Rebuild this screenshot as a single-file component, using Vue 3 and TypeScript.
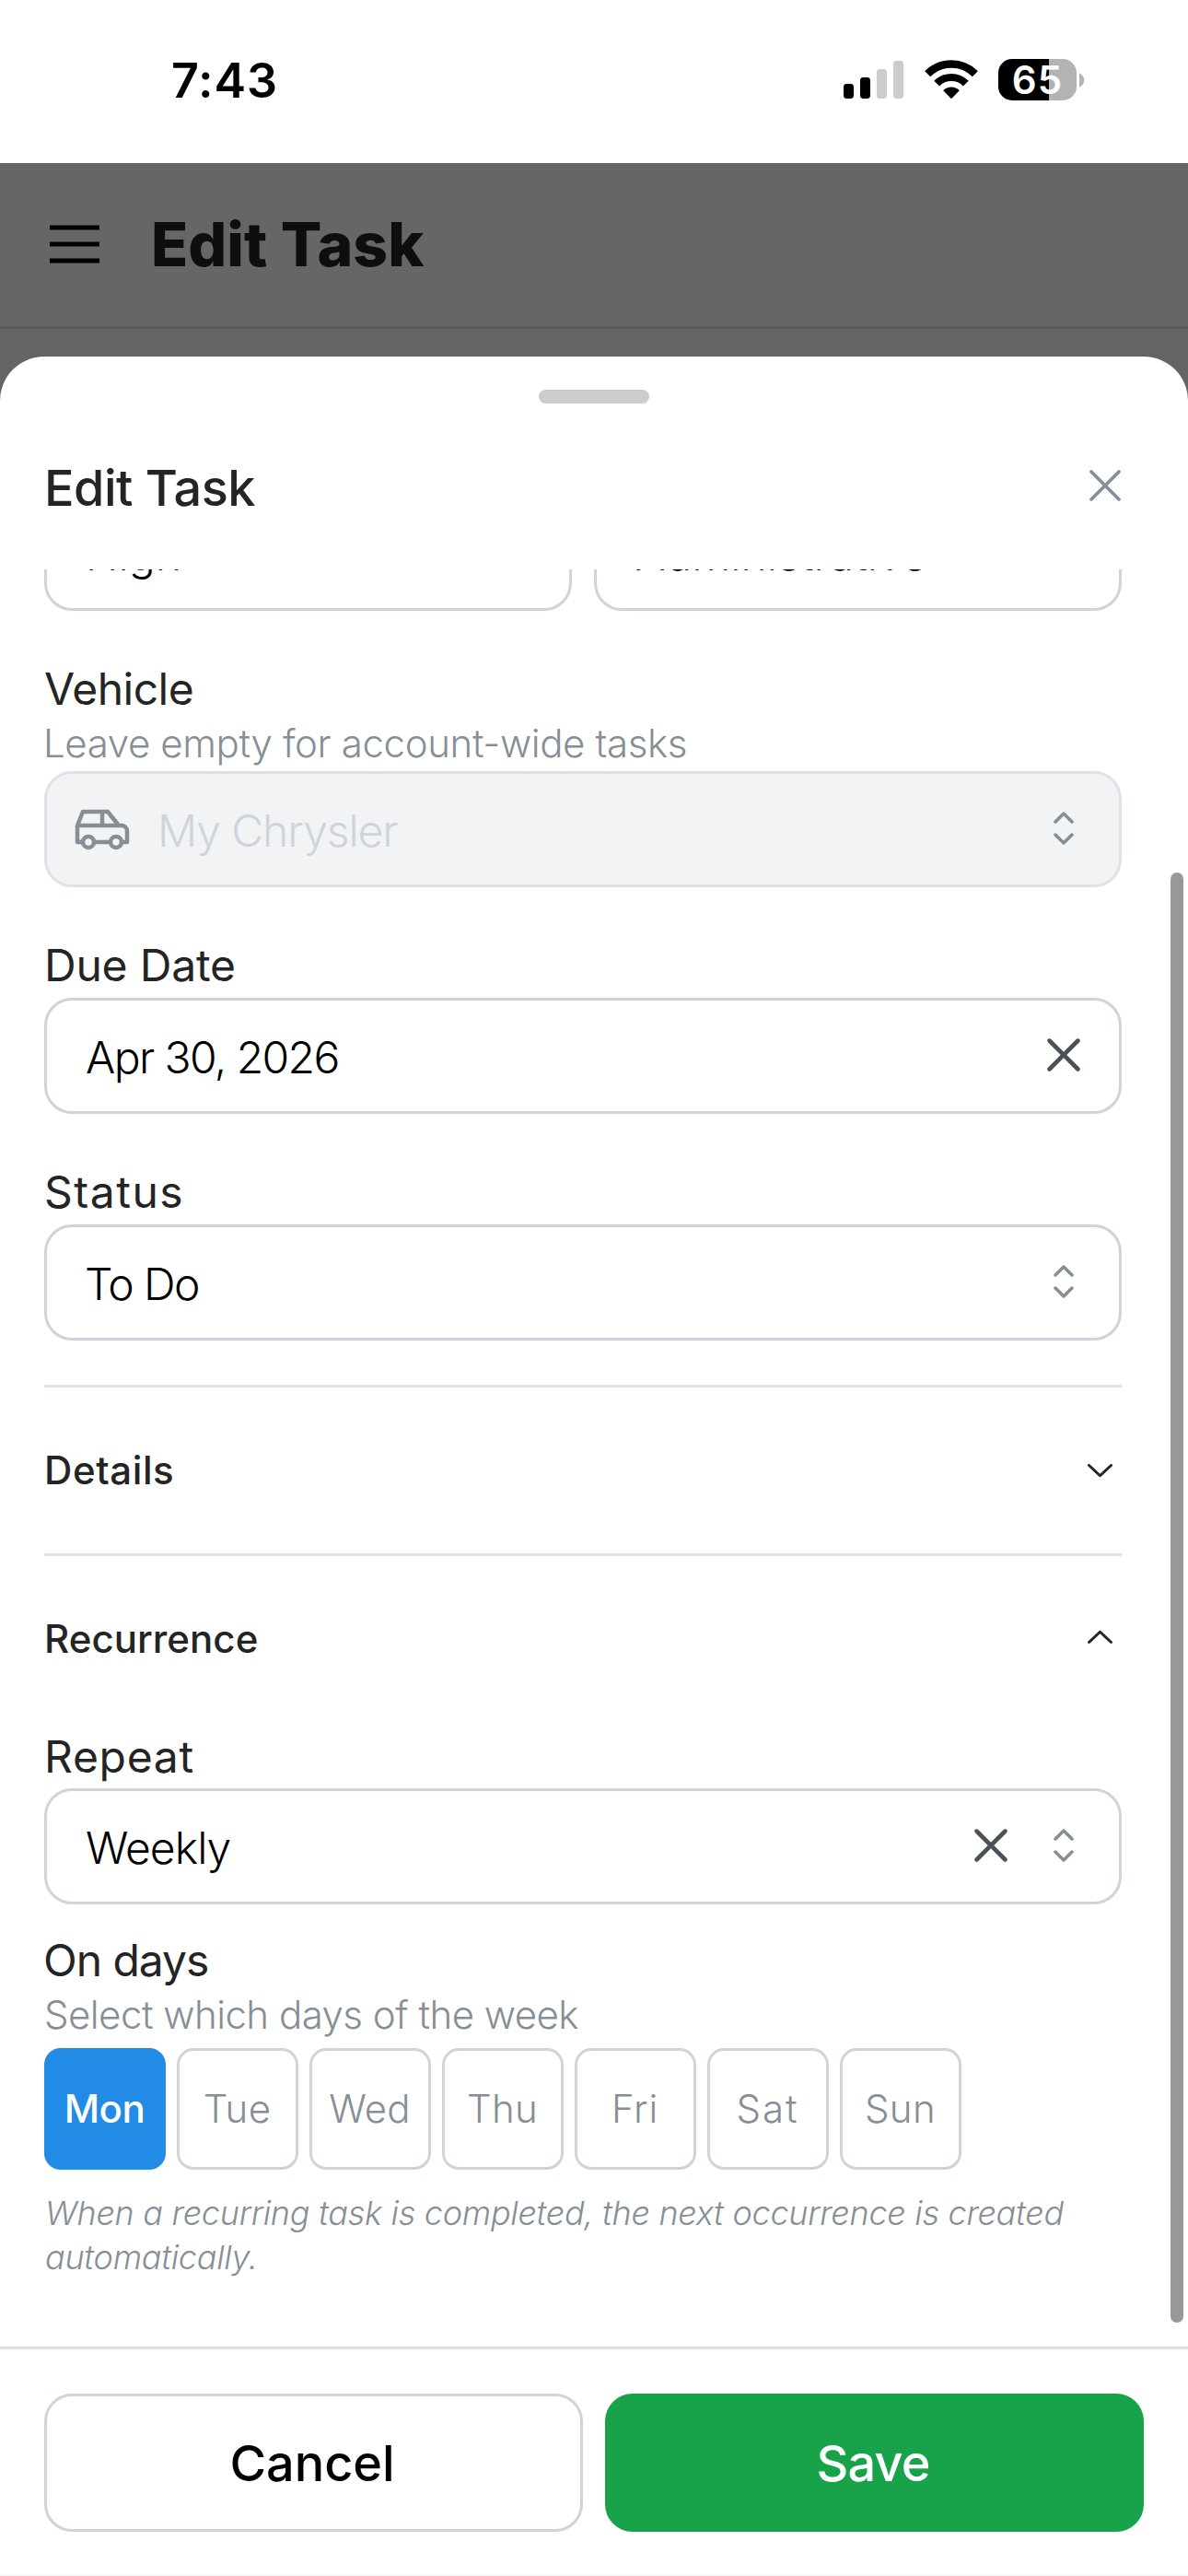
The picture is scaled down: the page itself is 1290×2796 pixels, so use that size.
<script setup lang="ts">
import { ref } from 'vue'

interface Day {
  name: string
  spacing: string
}

const days: Day[] = [
  { name: 'Mon', spacing: '-0.5px' },
  { name: 'Tue', spacing: '0.3px' },
  { name: 'Wed', spacing: '0.1px' },
  { name: 'Thu', spacing: '0.3px' },
  { name: 'Fri', spacing: '0.8px' },
  { name: 'Sat', spacing: '2px' },
  { name: 'Sun', spacing: '0.4px' },
]
const selected = ref<string[]>(['Mon'])

function toggle(name: string) {
  selected.value = selected.value.includes(name)
    ? selected.value.filter((d) => d !== name)
    : [...selected.value, name]
}

const selectorPath =
  'M4.93179 5.43179C4.75605 5.60753 4.75605 5.89245 4.93179 6.06819C5.10753 6.24392 5.39245 6.24392 5.56819 6.06819L7.49999 4.13638L9.43179 6.06819C9.60753 6.24392 9.89245 6.24392 10.0682 6.06819C10.2439 5.89245 10.2439 5.60753 10.0682 5.43179L7.81819 3.18179C7.73379 3.0974 7.61933 3.04999 7.49999 3.04999C7.38064 3.04999 7.26618 3.0974 7.18179 3.18179L4.93179 5.43179ZM10.0682 9.56819C10.2439 9.39245 10.2439 9.10753 10.0682 8.93179C9.89245 8.75606 9.60753 8.75606 9.43179 8.93179L7.49999 10.8636L5.56819 8.93179C5.39245 8.75606 5.10753 8.75606 4.93179 8.93179C4.75605 9.10753 4.75605 9.39245 4.93179 9.56819L7.18179 11.8182C7.35753 11.9939 7.64245 11.9939 7.81819 11.8182L10.0682 9.56819Z'
const clearPath =
  'M11.7816 4.03157C12.0062 3.80702 12.0062 3.44295 11.7816 3.2184C11.5571 2.99385 11.193 2.99385 10.9685 3.2184L7.50005 6.68682L4.03164 3.2184C3.80708 2.99385 3.44301 2.99385 3.21846 3.2184C2.99391 3.44295 2.99391 3.80702 3.21846 4.03157L6.68688 7.49999L3.21846 10.9684C2.99391 11.193 2.99391 11.557 3.21846 11.7816C3.44301 12.0061 3.80708 12.0061 4.03164 11.7816L7.50005 8.31316L10.9685 11.7816C11.193 12.0061 11.5571 12.0061 11.7816 11.7816C12.0062 11.557 12.0062 11.193 11.7816 10.9684L8.31322 7.49999L11.7816 4.03157Z'
const chevronPath =
  'M3.13523 6.15803C3.3241 5.95657 3.64052 5.94637 3.84197 6.13523L7.5 9.56464L11.158 6.13523C11.3595 5.94637 11.6759 5.95657 11.8648 6.15803C12.0536 6.35949 12.0434 6.67591 11.842 6.86477L7.84197 10.6148C7.64964 10.7951 7.35036 10.7951 7.15803 10.6148L3.15803 6.86477C2.95657 6.67591 2.94637 6.35949 3.13523 6.15803Z'
</script>

<template>
  <div class="screen">
    <div class="status-bar">
      <span class="time">7:43</span>
      <div class="indicators">
        <svg class="signal" width="66" height="42" viewBox="0 0 66 42">
          <rect x="0" y="25" width="11" height="16" rx="3.4" />
          <rect x="18" y="18" width="11" height="23" rx="3.4" />
          <rect x="36" y="9" width="11" height="32" rx="3.4" fill="#ccc" />
          <rect x="54" y="0" width="11" height="41" rx="3.4" fill="#ccc" />
        </svg>
        <svg class="wifi" width="58" height="43" viewBox="0 0 58 43">
          <path d="M3.2 15.2A36.5 36.5 0 0 1 54.8 15.2" fill="none" stroke="#000" stroke-width="8.6" />
          <path d="M13.2 25.6A22.2 22.2 0 0 1 44.8 25.6" fill="none" stroke="#000" stroke-width="8.2" />
          <path d="M29 42.2L20.2 33.2A12.6 12.6 0 0 1 37.8 33.2Z" />
        </svg>
        <div class="battery"><span class="level">65</span></div>
        <svg class="nub" width="6" height="16" viewBox="0 0 6 16">
          <path d="M0 0.5C3 1.6 5.2 4.6 5.2 8S3 14.4 0 15.5Z" fill="#b3b3b3" />
        </svg>
      </div>
    </div>

    <header class="app-header">
      <svg width="54" height="42" viewBox="0 0 54 42">
        <path d="M0 3H54M0 21H54M0 39H54" stroke="#000" stroke-width="4.8" />
      </svg>
      <h1>Edit Task</h1>
    </header>

    <section class="sheet">
      <div class="handle"></div>
      <div class="sheet-header">
        <h2>Edit Task</h2>
        <svg class="close" width="60" height="60" viewBox="0 0 24 24" fill="none" stroke="#868e96" stroke-width="1.5" stroke-linecap="round">
          <path d="M18 6L6 18M6 6l12 12" />
        </svg>
      </div>

      <div class="body">
        <div class="content">
          <div class="pair">
            <div class="input"><span>High</span></div>
            <div class="input"><span class="w-category">Administrative</span></div>
          </div>

          <div class="field">
            <div class="label w-vehicle">Vehicle</div>
            <div class="desc w-leave">Leave empty for account-wide tasks</div>
            <div class="input disabled">
              <svg class="car" width="72" height="72" viewBox="0 0 24 24" fill="none" stroke="#868e96" stroke-width="1.5" stroke-linecap="round" stroke-linejoin="round">
                <path d="M5 17a2 2 0 1 0 4 0a2 2 0 1 0 -4 0M15 17a2 2 0 1 0 4 0a2 2 0 1 0 -4 0" />
                <path d="M5 17h-2v-6l2 -5h9l4 5h1a2 2 0 0 1 2 2v4h-2m-4 0h-6m-6 -6h15m-6 0v-5" />
              </svg>
              <span class="w-car">My Chrysler</span>
              <svg class="sel" viewBox="0 0 15 15"><path :d="selectorPath" /></svg>
            </div>
          </div>

          <div class="field">
            <div class="label gap w-due">Due Date</div>
            <div class="input">
              <span class="w-date">Apr 30, 2026</span>
              <svg class="clear" viewBox="0 0 15 15"><path :d="clearPath" /></svg>
            </div>
          </div>

          <div class="field">
            <div class="label gap w-status">Status</div>
            <div class="input">
              <span class="w-todo">To Do</span>
              <svg class="sel" viewBox="0 0 15 15"><path :d="selectorPath" /></svg>
            </div>
          </div>

          <div class="section first">
            <span class="w-details">Details</span>
            <svg class="chev" viewBox="0 0 15 15"><path :d="chevronPath" /></svg>
          </div>
          <div class="section">
            <span class="w-rec">Recurrence</span>
            <svg class="chev open" viewBox="0 0 15 15"><path :d="chevronPath" /></svg>
          </div>

          <div class="field repeat">
            <div class="label w-repeat">Repeat</div>
            <div class="input">
              <span class="w-weekly">Weekly</span>
              <svg class="clear inner" viewBox="0 0 15 15"><path :d="clearPath" /></svg>
              <svg class="sel" viewBox="0 0 15 15"><path :d="selectorPath" /></svg>
            </div>
          </div>

          <div class="field on-days">
            <div class="label w-ondays">On days</div>
            <div class="desc gap w-select">Select which days of the week</div>
            <div class="days">
              <button
                v-for="day in days"
                :key="day.name"
                class="day"
                :class="{ active: selected.includes(day.name) }"
                :style="{ letterSpacing: day.spacing }"
                @click="toggle(day.name)"
              >{{ day.name }}</button>
            </div>
          </div>

          <p class="note">When a recurring task is completed, the next occurrence is created automatically.</p>
        </div>
        <div class="scrollbar"></div>
      </div>

      <footer class="footer">
        <button class="btn">Cancel</button>
        <button class="btn save">Save</button>
      </footer>
    </section>
  </div>
</template>

<style>
html,
body {
  margin: 0;
  background: #fff;
}
</style>

<style scoped>
.screen {
  width: 1290px;
  height: 2796px;
  box-sizing: border-box;
  display: flex;
  flex-direction: column;
  overflow: hidden;
  background: linear-gradient(#fff 0 177px, #646464 177px);
  font-family: Inter, 'Liberation Sans', sans-serif;
  color: #242424;
}
.status-bar {
  height: 177px;
  flex: none;
  box-sizing: border-box;
  padding: 58px 112px 0 186px;
  display: flex;
  justify-content: space-between;
  align-items: flex-start;
  background: #fff;
}
.time {
  font-size: 52px;
  line-height: 60px;
  font-weight: 600;
  letter-spacing: 0.9px;
  color: #000;
}
.indicators {
  display: flex;
  align-items: flex-start;
  padding-top: 6px;
}
.signal {
  margin-top: 2px;
}
.wifi {
  margin: 1px 0 0 21.5px;
}
.battery {
  width: 85px;
  height: 45px;
  margin-left: 22.5px;
  border-radius: 15px;
  background: linear-gradient(90deg, #000 0 55px, #b3b3b3 55px);
  color: #fff;
}
.level {
  display: block;
  padding-left: 14.7px;
  font-size: 42px;
  line-height: 46px;
  font-weight: 600;
  letter-spacing: 1.1px;
}
.nub {
  margin: 15px 0 0 3px;
}
.app-header {
  height: 180px;
  flex: none;
  box-sizing: border-box;
  border-bottom: 3px solid #5b5b5b;
  background: #666;
  padding-left: 54px;
  display: flex;
  align-items: center;
}
.app-header svg {
  margin-top: -1px;
}
.app-header h1 {
  margin: -2px 0 0 56px;
  font-size: 66px;
  line-height: 80px;
  font-weight: 800;
  letter-spacing: 0;
  color: #0e0e0f;
}
.sheet {
  flex: 1;
  min-height: 0;
  margin-top: 30px;
  display: flex;
  flex-direction: column;
  background: #fff;
  border-radius: 48px 48px 0 0;
}
.handle {
  flex: none;
  width: 120px;
  height: 15px;
  margin: 36px auto 0;
  border-radius: 8px;
  background: #ccc;
}
.sheet-header {
  flex: none;
  height: 180px;
  box-sizing: border-box;
  padding: 59px 60px 0 48px;
  display: flex;
  justify-content: space-between;
  align-items: flex-start;
}
.sheet-header h2 {
  margin: 0;
  font-size: 54px;
  line-height: 65px;
  font-weight: 500;
  letter-spacing: -0.5px;
}
.body {
  flex: 1;
  min-height: 0;
  position: relative;
  overflow: hidden;
}
.content {
  margin: -81px 72px 0 48px;
}
.pair {
  display: grid;
  grid-template-columns: 1fr 1fr;
  gap: 24px;
}
.input {
  height: 126px;
  box-sizing: border-box;
  border: 3px solid #ced4da;
  border-radius: 30px;
  padding: 2px 30px 0 42px;
  display: flex;
  align-items: center;
  font-size: 48px;
  font-weight: 300;
  color: #000;
}
.input.disabled {
  background: #f1f3f5;
  border-color: #dee2e6;
  color: #ced4da;
  padding-left: 24px;
}
.car {
  flex: none;
  margin: -4px 24px 0 0;
}
.input span {
  white-space: nowrap;
}
.sel {
  flex: none;
  width: 60px;
  height: 60px;
  margin: -4px 0 0 auto;
  fill: #868e96;
}
.clear {
  flex: none;
  width: 60px;
  height: 60px;
  margin: -5px 0 0 auto;
  fill: #495057;
}
.clear.inner + .sel {
  margin-left: 19px;
}
.field {
  margin-top: 54px;
}
.label {
  height: 60px;
  line-height: 61px;
  font-size: 48px;
  font-weight: 400;
}
.desc {
  height: 60px;
  line-height: 60px;
  font-size: 42px;
  font-weight: 300;
  color: #868e96;
  white-space: nowrap;
}
.gap {
  margin-bottom: 6px;
}
.section {
  height: 183px;
  box-sizing: border-box;
  border-top: 3px solid #dee2e6;
  padding-right: 1.5px;
  display: flex;
  justify-content: space-between;
  align-items: center;
  font-size: 42px;
  font-weight: 500;
}
.section span {
  margin-top: -2px;
}
.section.first {
  margin-top: 48px;
}
.chev {
  width: 45px;
  height: 45px;
  fill: #242424;
  margin-top: -6px;
}
.chev.open {
  margin-top: 1px;
  transform: rotate(180deg);
}
.repeat {
  margin-top: 7px;
}
.repeat .label {
  margin-bottom: 5px;
}
.on-days {
  margin-top: 30px;
}
.days {
  display: flex;
  gap: 12px;
}
.day {
  width: 132px;
  height: 132px;
  box-sizing: border-box;
  border: 3px solid #ced4da;
  border-radius: 18px;
  padding: 0 1px 1px 0;
  background: #fff;
  font-family: inherit;
  font-size: 42px;
  font-weight: 300;
  color: #868e96;
}
.day.active {
  background: #228be6;
  border-color: #228be6;
  color: #fff;
  font-weight: 500;
}
.note {
  margin: 23px 0 0 1px;
  font-size: 36px;
  line-height: 48px;
  font-style: italic;
  font-weight: 300;
  letter-spacing: -0.28px;
  color: #868e96;
}
.scrollbar {
  position: absolute;
  top: 329px;
  right: 5px;
  width: 14px;
  height: 1574px;
  border-radius: 7px;
  background: #989898;
}
.footer {
  flex: none;
  height: 249px;
  box-sizing: border-box;
  border-top: 3px solid #dee2e6;
  border-bottom: 1px solid #f3f3f3;
  padding: 48px 48px 0;
  display: grid;
  grid-template-columns: 1fr 1fr;
  gap: 24px;
}
.btn {
  height: 150px;
  box-sizing: border-box;
  border: 3px solid #ced4da;
  border-radius: 30px;
  padding: 1px 3px 0 0;
  background: #fff;
  font-family: inherit;
  font-size: 54px;
  font-weight: 500;
  color: #000;
}
.btn.save {
  background: #18a34a;
  border-color: #18a34a;
  color: #fff;
  letter-spacing: -0.8px;
}
.w-category { letter-spacing: 0.1px; }
.w-vehicle { letter-spacing: -0.5px; }
.w-leave { letter-spacing: -0.37px; margin-left: -1px; }
.w-car { letter-spacing: -1.1px; }
.w-due { letter-spacing: -0.2px; }
.w-date { letter-spacing: -1.61px; }
.w-status { letter-spacing: 1.5px; }
.w-todo { letter-spacing: -1.56px; margin-left: -1px; }
.w-details { letter-spacing: 0.6px; }
.w-rec { letter-spacing: 0.05px; }
.w-repeat { letter-spacing: 0.7px; }
.w-weekly { letter-spacing: -0.95px; }
.w-ondays { letter-spacing: -1.03px; margin-left: -1px; }
.w-select { letter-spacing: -0.52px; }
</style>
